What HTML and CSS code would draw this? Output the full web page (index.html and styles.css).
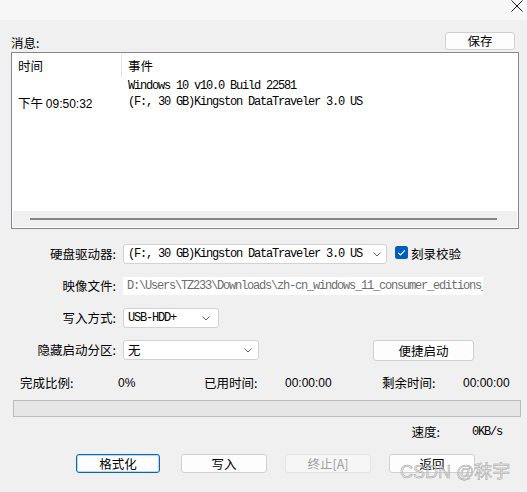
FILE: index.html
```html
<!DOCTYPE html>
<html lang="zh-CN">
<head>
<meta charset="utf-8">
<title>写入硬盘映像</title>
<link rel="stylesheet" href="styles.css">
</head>
<body>
<div class="titlebar">
  <svg class="close" width="12" height="12" viewBox="0 0 12 12"><path d="M0.5 0.5 L11.5 11.5 M11.5 0.5 L0.5 11.5" stroke="#1a1a1a" stroke-width="1" fill="none"/></svg>
</div>

<div class="msg-head">
  <span class="lbl">消息:</span>
  <button class="btn save">保存</button>
</div>

<div class="list">
  <div class="lrow head"><div class="c1">时间</div><div class="c2">事件</div></div>
  <div class="lrow"><div class="c1"></div><div class="c2 mono">Windows 10 v10.0 Build 22581</div></div>
  <div class="lrow r2"><div class="c1">下午 <span class="num">09:50:32</span></div><div class="c2 mono">(F:, 30 GB)Kingston DataTraveler 3.0 US</div></div>
  <div class="fill"></div>
  <div class="hscroll"><div class="thumb"></div></div>
</div>

<div class="form">
  <div class="frow">
    <span class="flabel">硬盘驱动器:</span>
    <div class="combo drive"><span class="mono">(F:, 30 GB)Kingston DataTraveler 3.0 US</span><svg class="chev" width="8" height="5" viewBox="0 0 8 5"><path d="M0.5 0.5 L4 4 L7.5 0.5" stroke="#606060" fill="none"/></svg></div>
    <svg class="check" width="13" height="13" viewBox="0 0 13 13"><rect x="0" y="0" width="13" height="13" rx="2.5" fill="#005fb8"/><path d="M3.3 6.8 L5.5 8.9 L9.8 4.3" stroke="#fff" stroke-width="1.1" fill="none"/></svg>
    <span class="chklabel">刻录校验</span>
  </div>
  <div class="frow r-img">
    <span class="flabel">映像文件:</span>
    <div class="field mono">D:\Users\TZ233\Downloads\zh-cn_windows_11_consumer_editions_x64.iso</div>
  </div>
  <div class="frow r-mode">
    <span class="flabel">写入方式:</span>
    <div class="combo wmode"><span class="mono">USB-HDD+</span><svg class="chev" width="8" height="5" viewBox="0 0 8 5"><path d="M0.5 0.5 L4 4 L7.5 0.5" stroke="#606060" fill="none"/></svg></div>
  </div>
  <div class="frow r-hide">
    <span class="flabel">隐藏启动分区:</span>
    <div class="combo hidden"><span>无</span><svg class="chev" width="8" height="5" viewBox="0 0 8 5"><path d="M0.5 0.5 L4 4 L7.5 0.5" stroke="#606060" fill="none"/></svg></div>
    <button class="btn quick">便捷启动</button>
  </div>
</div>

<div class="prog-labels">
  <span>完成比例:</span>
  <span class="num">0%</span>
  <span>已用时间:</span>
  <span class="num">00:00:00</span>
  <span>剩余时间:</span>
  <span class="num">00:00:00</span>
</div>

<div class="progress"></div>

<div class="speed">
  <span>速度:</span>
  <span class="mono speed-val">0KB/s</span>
</div>

<div class="actions">
  <button class="btn b-format">格式化</button>
  <button class="btn b-write">写入</button>
  <button class="btn b-stop" disabled>终止[A]</button>
  <button class="btn b-back">返回</button>
</div>

<div class="watermark">CSDN @秣宇</div>
</body>
</html>
```

FILE: styles.css
```css
* { box-sizing: border-box; }

body {
  margin: 0;
  width: 527px;
  height: 492px;
  overflow: hidden;
  position: relative;
  background: #f0f0f0;
  color: #000;
  font-family: "Noto Sans CJK SC", "Noto Sans", sans-serif;
  font-size: 12.5px;
  line-height: 16px;
}

.mono {
  font-family: "Liberation Mono", "Noto Sans CJK SC", monospace;
  font-size: 12px;
  letter-spacing: -1.2px;
}

.num {
  font-family: "Liberation Sans", "Noto Sans", sans-serif;
  font-size: 12px;
}

.titlebar {
  height: 20px;
  background: #f7f7f7;
  display: flex;
  justify-content: flex-end;
  align-items: flex-start;
  padding-right: 4px;
}

.msg-head {
  display: flex;
  justify-content: space-between;
  align-items: flex-end;
  height: 18px;
  margin: 12px 12px 0 11px;
}

.lbl { line-height: 14px; }

.btn {
  font-family: "Noto Sans CJK SC", "Noto Sans", sans-serif;
  font-size: 12.5px;
  color: #000;
  background: #fdfdfd;
  border: 1px solid #d0d0d0;
  border-radius: 3px;
  padding: 0;
  height: 19px;
  line-height: 17px;
}

.save { width: 70px; height: 18px; line-height: 16px; }

.list {
  margin: 2px 8px 0 11px;
  height: 177px;
  border: 1px solid #828790;
  background: #fff;
  padding: 1px;
  display: flex;
  flex-direction: column;
}

.lrow { display: flex; height: 16px; line-height: 16px; white-space: nowrap; }
.lrow.head { height: 24px; line-height: 24px; }
.lrow.r2 { line-height: 17px; }

.c1 { width: 109px; padding-left: 5px; border-right: 1px solid transparent; }
.head .c1 { border-right-color: #e5e5e5; }
.c2 { padding-left: 6px; }

.fill { flex: 1; }

.hscroll {
  height: 16px;
  background: #f0f0f0;
  display: flex;
  align-items: center;
  padding: 0 20px 0 17px;
}
.thumb { flex: 1; height: 2px; background: #858585; }

.form { margin-top: 15px; display: flex; flex-direction: column; }

.frow { display: flex; align-items: center; height: 20px; }
.r-img { height: 18px; margin-top: 13px; }
.r-mode { margin-top: 13px; }
.r-hide { margin-top: 12px; }

.flabel {
  width: 116px;
  margin-right: 7px;
  text-align: right;
  white-space: nowrap;
}

.combo {
  height: 20px;
  display: flex;
  align-items: center;
  justify-content: space-between;
  background: #fff;
  border: 1px solid #d2d2d2;
  border-radius: 3px;
  padding: 0 5px 0 4px;
  white-space: nowrap;
}
.combo.drive { width: 264px; }
.combo.wmode { width: 96px; padding-right: 8px; }
.combo.hidden { width: 136px; padding-right: 6px; }

.check { align-self: flex-start; margin: 2px 0 0 8px; }
.chklabel { margin-left: 3px; }

.field {
  width: 360px;
  height: 18px;
  line-height: 18px;
  background: #fff;
  padding-left: 4px;
  overflow: hidden;
  white-space: nowrap;
  color: #6d6d6d;
}

.quick { margin-left: 114px; width: 101px; height: 21px; line-height: 19px; }

.prog-labels {
  margin-top: 15px;
  display: grid;
  grid-template-columns: 98px 86px 81px 97px 81px auto;
  padding-left: 20px;
  height: 16px;
  line-height: 16px;
  white-space: nowrap;
}

.progress {
  margin: 9px 6px 0 13px;
  height: 17px;
  background: #e6e6e6;
  border: 1px solid #bcbcbc;
}

.speed {
  margin-top: 7px;
  height: 16px;
  display: flex;
  justify-content: flex-end;
  padding-right: 25px;
}
.speed-val { margin-left: 32px; }

.actions {
  margin-top: 14px;
  display: flex;
  padding-left: 76px;
}
.b-format {
  width: 84px;
  margin-right: 21px;
  border-color: #0067c0;
  box-shadow: inset 0 0 0 1px rgba(0, 103, 192, 0.25);
}
.b-write { width: 86px; margin-right: 18px; }
.b-stop {
  width: 86px;
  margin-right: 18px;
  background: #f6f6f6;
  border-color: #e3e3e3;
  color: #a0a0a0;
}
.b-back { width: 86px; }

.watermark {
  position: absolute;
  left: 400px;
  top: 461px;
  font-family: "Liberation Sans", "Noto Sans CJK SC", sans-serif;
  font-size: 18px;
  line-height: 22px;
  color: rgba(225, 225, 225, 0.7);
  -webkit-text-stroke: 0.5px rgba(140, 140, 140, 0.8);
  white-space: nowrap;
}
```
